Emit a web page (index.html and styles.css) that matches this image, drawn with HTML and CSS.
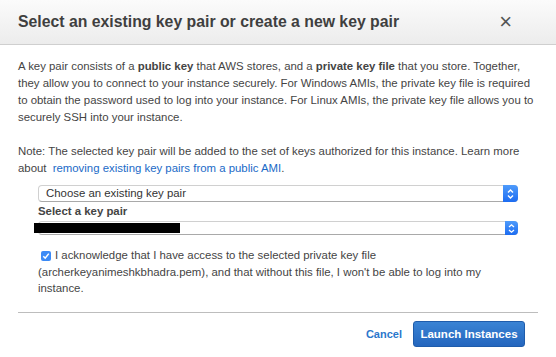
FILE: index.html
```html
<!DOCTYPE html>
<html>
<head>
<meta charset="utf-8">
<link rel="stylesheet" href="styles.css">
</head>
<body>
<div class="dialog">
  <div class="header">
    <h1 class="title">Select an existing key pair or create a new key pair</h1>
    <span class="close">×</span>
  </div>
  <div class="content">
    <p class="para">A key pair consists of a <b>public key</b> that AWS stores, and a <b>private key file</b> that you store. Together,<br>they allow you to connect to your instance securely. For Windows AMIs, the private key file is required<br>to obtain the password used to log into your instance. For Linux AMIs, the private key file allows you to<br>securely SSH into your instance.</p>
    <p class="para note">Note: The selected key pair will be added to the set of keys authorized for this instance. Learn more<br>about <a class="link" href="#">removing existing key pairs from a public AMI</a>.</p>
    <div class="form">
      <div class="select big">
        <span class="select-text">Choose an existing key pair</span>
        <span class="stepper">
          <svg width="9" height="12" viewBox="0 0 9 12"><path d="M2 4.5 L4.5 2 L7 4.5 M2 7.5 L4.5 10 L7 7.5" fill="none" stroke="#fff" stroke-width="1.4"/></svg>
        </span>
      </div>
      <div class="label">Select a key pair</div>
      <div class="select small">
        <span class="redact"></span>
        <span class="stepper">
          <svg width="9" height="11" viewBox="0 0 9 11"><path d="M2 4 L4.5 1.8 L7 4 M2 7 L4.5 9.2 L7 7" fill="none" stroke="#fff" stroke-width="1.3"/></svg>
        </span>
      </div>
      <div class="ack">
        <span class="check"><svg width="8" height="8" viewBox="0 0 8 8"><path d="M1.3 4.2 L3.2 6.2 L6.8 1.6" fill="none" stroke="#fff" stroke-width="1.5"/></svg></span>I acknowledge that I have access to the selected private key file<br>(archerkeyanimeshkbhadra.pem), and that without this file, I won't be able to log into my<br>instance.
      </div>
    </div>
  </div>
  <div class="footer">
    <a class="cancel" href="#">Cancel</a>
    <button class="launch">Launch Instances</button>
  </div>
</div>
</body>
</html>
```
FILE: styles.css
```css
html, body {
  margin: 0;
  padding: 0;
  background: #fff;
}
body {
  font-family: "Liberation Sans", Arial, sans-serif;
  color: #444;
  width: 556px;
  height: 357px;
  overflow: hidden;
}
.dialog {
  display: flex;
  flex-direction: column;
}
.header {
  height: 44px;
  border-bottom: 1px solid #cfcfcf;
  background: linear-gradient(#fbfbfb, #ececec);
  display: flex;
  align-items: center;
  justify-content: space-between;
  padding: 0 44px 0 18px;
}
.title {
  margin: 0;
  font-size: 15.8px;
  font-weight: bold;
  color: #3f3f3f;
}
.close {
  font-size: 22px;
  color: #555;
  line-height: 1;
}
.content {
  padding: 13px 18px 0 18px;
  font-size: 11.4px;
  line-height: 17px;
}
.para {
  margin: 0;
  white-space: nowrap;
}
.note {
  margin-top: 17px;
}
.link {
  color: #1a6ac7;
  text-decoration: none;
  margin-left: 3px;
}
.form {
  margin: 8px 0 0 20px;
}
.select {
  position: relative;
  width: 480px;
  box-sizing: border-box;
  border: 1px solid #d0d0d0;
  border-bottom-color: #a9a9a9;
  border-radius: 4px;
  background: #fff;
  display: flex;
  align-items: center;
}
.select.big {
  height: 17px;
}
.select.small {
  height: 14px;
  margin-top: 1px;
}
.select-text {
  padding-left: 7px;
  font-size: 11.4px;
  color: #333;
  line-height: 15px;
}
.stepper {
  position: absolute;
  right: -1px;
  top: -1px;
  bottom: -1px;
  width: 15px;
  background: linear-gradient(#4e9bfb, #1d6cf1);
  border-radius: 0 4px 4px 0;
  display: flex;
  align-items: center;
  justify-content: center;
}
.small .stepper {
  width: 13px;
}
.redact {
  position: absolute;
  left: -5px;
  top: 1px;
  width: 146px;
  height: 10px;
  background: #000;
}
.label {
  font-weight: bold;
  font-size: 11.4px;
  line-height: 17px;
  margin-top: 1px;
  color: #444;
}
.ack {
  margin-top: 12px;
  line-height: 16.5px;
  color: #444;
  white-space: nowrap;
}
.check {
  display: inline-flex;
  align-items: center;
  justify-content: center;
  width: 10px;
  height: 10px;
  border-radius: 2px;
  background: #3b8af6;
  vertical-align: -1px;
  margin: 0 4px 0 3px;
}
.footer {
  margin: 15px 18px 0 18px;
  border-top: 1px solid #bdbdbd;
  padding-top: 8px;
  display: flex;
  justify-content: flex-end;
  align-items: center;
  padding-right: 13px;
}
.cancel {
  color: #2b77cc;
  font-weight: bold;
  font-size: 11px;
  text-decoration: none;
  margin-right: 11px;
}
.launch {
  height: 26px;
  width: 112px;
  border: 1px solid #1f5cab;
  border-radius: 3px;
  background: linear-gradient(#3a83d4, #2466be);
  color: #fff;
  font-family: "Liberation Sans", Arial, sans-serif;
  font-weight: bold;
  font-size: 11.5px;
  padding: 0;
}
```
